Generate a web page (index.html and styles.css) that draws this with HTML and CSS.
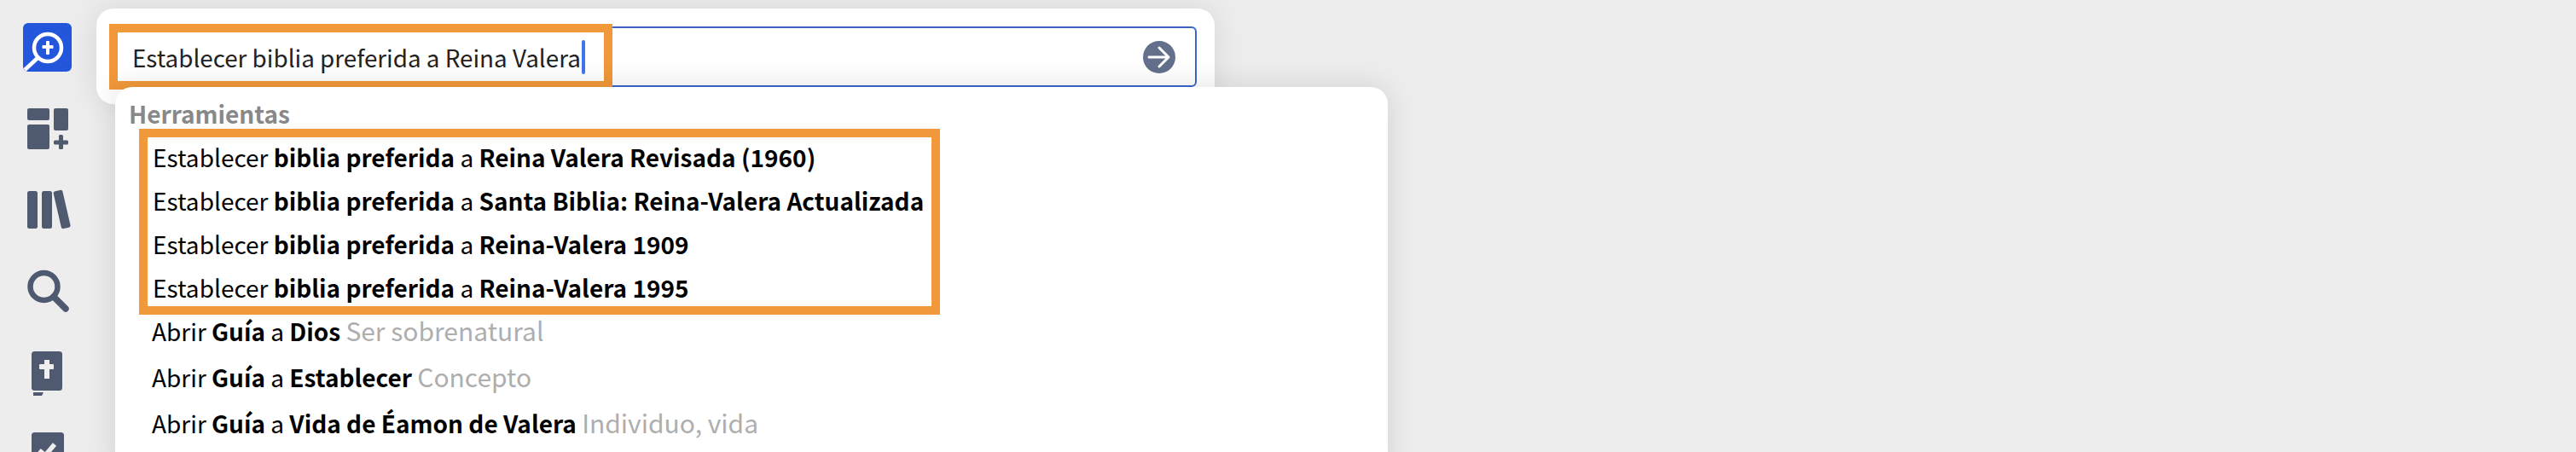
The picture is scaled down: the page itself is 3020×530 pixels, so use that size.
FILE: index.html
```html
<!DOCTYPE html>
<html lang="es">
<head>
<meta charset="utf-8">
<title>Búsqueda</title>
<link rel="stylesheet" href="styles.css">
</head>
<body>
<div class="app">
  <nav class="sidebar">
    <svg class="nav-icon" viewBox="0 0 57 57"><rect width="57" height="57" rx="6" fill="#2456dc"/><circle cx="29" cy="29" r="16" fill="none" stroke="#fff" stroke-width="4.5"/><path d="M17 41 2 55" stroke="#fff" stroke-width="4.5" fill="none"/><rect x="27" y="21" width="4" height="16" rx="1" fill="#fff"/><rect x="22.500" y="26" width="13" height="4" rx="1" fill="#fff"/></svg>
    <svg class="nav-icon" viewBox="0 0 57 57"><rect x="5" y="4" width="26" height="14" rx="2" class="ink"/><rect x="5" y="23" width="26" height="29" rx="2" class="ink"/><rect x="36" y="4" width="17" height="26" rx="2" class="ink"/><rect x="36" y="41.500" width="17" height="5" rx="1.500" class="ink"/><rect x="42" y="35" width="5" height="17" rx="1.500" class="ink"/></svg>
    <svg class="nav-icon" viewBox="0 0 57 57"><rect x="5" y="5" width="12" height="44" rx="2.500" class="ink"/><rect x="22" y="5" width="12" height="44" rx="2.500" class="ink"/><rect x="40" y="4" width="11" height="45" rx="2.500" class="ink" transform="rotate(-13 45.500 26)"/></svg>
    <svg class="nav-icon" viewBox="0 0 57 57"><circle cx="24.500" cy="21" r="16" fill="none" stroke="#4f5a70" stroke-width="6.500"/><path d="M36 33 50 47" stroke="#4f5a70" stroke-width="7.500" stroke-linecap="round" fill="none"/></svg>
    <svg class="nav-icon" viewBox="0 0 57 57"><rect x="10" y="1" width="36" height="46" rx="3.500" class="ink"/><rect x="25" y="11" width="6" height="22" fill="#eee"/><rect x="19" y="16" width="17" height="6" rx="1" fill="#eee"/><path d="M12 49H24L22 53H12Z" class="ink"/></svg>
    <svg class="nav-icon" viewBox="0 0 57 57"><rect x="10" y="0" width="38" height="46" rx="3.500" class="ink"/><path d="M19 21 26 27 37 14" fill="none" stroke="#eee" stroke-width="5.500"/></svg>
  </nav>
  <main class="main">
    <section class="search-card">
      <div class="search-input">
        <span class="query">Establecer biblia preferida a Reina Valera</span><span class="caret"></span>
        <svg class="go" viewBox="0 0 38 38"><circle cx="19" cy="19" r="19" fill="#63708c"/><path d="M7 19H30M19 8 30 19 19 30" fill="none" stroke="#fff" stroke-width="3" stroke-linecap="round" stroke-linejoin="round"/></svg>
      </div>
      <div class="query-mark"></div>
    </section>
    <section class="dropdown">
      <h2 class="group-title">Herramientas</h2>
      <div class="marked">
        <p class="row">Establecer <b>biblia preferida</b> a <b>Reina Valera Revisada (1960)</b></p>
        <p class="row">Establecer <b>biblia preferida</b> a <b>Santa Biblia: Reina-Valera Actualizada</b></p>
        <p class="row">Establecer <b>biblia preferida</b> a <b>Reina-Valera 1909</b></p>
        <p class="row">Establecer <b>biblia preferida</b> a <b>Reina-Valera 1995</b></p>
      </div>
      <div class="plain">
        <p class="row">Abrir <b>Guía</b> a <b>Dios</b> <span class="hint">Ser sobrenatural</span></p>
        <p class="row">Abrir <b>Guía</b> a <b>Establecer</b> <span class="hint">Concepto</span></p>
        <p class="row">Abrir <b>Guía</b> a <b>Vida de Éamon de Valera</b> <span class="hint">Individuo, vida</span></p>
      </div>
    </section>
  </main>
</div>
</body>
</html>
```
FILE: styles.css
```css
* { box-sizing: border-box; }
html, body { margin: 0; height: 530px; overflow: hidden; }
body {
  background: #ededed;
  font-family: "Noto Sans CJK SC", "Noto Sans CJK JP", "Noto Sans", sans-serif;
  color: #000;
}
.app { display: flex; height: 530px; overflow: hidden; }
.sidebar {
  width: 113px;
  flex: none;
  display: flex;
  flex-direction: column;
  gap: 39px;
  padding: 27px 0 0 27px;
}
.nav-icon { width: 57px; height: 57px; flex: none; display: block; }
.ink { fill: #4f5a70; }
.main { position: relative; flex: 1; padding-top: 10px; }
.search-card {
  position: relative;
  width: 1311px;
  height: 112px;
  padding: 21px 21px 20px 20px;
  background: #fff;
  border-radius: 20px;
  box-shadow: 0 0 36px rgba(0, 0, 0, .1);
}
.search-input {
  height: 71px;
  display: flex;
  align-items: center;
  padding: 0 23px 0 20px;
  border: 2px solid #3a66c8;
  border-radius: 6px;
}
.query { font-size: 27.800px; line-height: 40px; color: #222; }
.caret {
  width: 4px;
  height: 40px;
  margin-left: 1px;
  background: #3f74ea;
  border-radius: 2px;
}
.go { width: 38px; height: 38px; margin-left: auto; }
.query-mark {
  position: absolute;
  left: 15px;
  top: 18px;
  width: 590px;
  height: 77px;
  border: 10px solid #f0983a;
}
.dropdown {
  position: absolute;
  left: 22px;
  top: 102px;
  width: 1492px;
  height: 460px;
  padding: 13px 0 0 16px;
  background: #fff;
  border-radius: 20px;
  box-shadow: 0 0 36px rgba(0, 0, 0, .12);
}
.group-title {
  margin: 0;
  font-size: 28px;
  line-height: 36px;
  font-weight: 700;
  color: #888;
}
.marked {
  width: 939px;
  height: 218px;
  margin-left: 12px;
  padding: 0 6px;
  display: flex;
  flex-direction: column;
  gap: 5px;
  border: 10px solid #f0983a;
}
.plain {
  display: flex;
  flex-direction: column;
  gap: 13px;
  margin-top: -2px;
  padding-left: 27px;
}
.row {
  margin: 0;
  font-size: 28px;
  line-height: 46px;
  white-space: nowrap;
}
.plain .row { line-height: 40px; }
.row b { font-weight: 700; }
.hint { font-size: 30px; color: #aeaeae; }
```
